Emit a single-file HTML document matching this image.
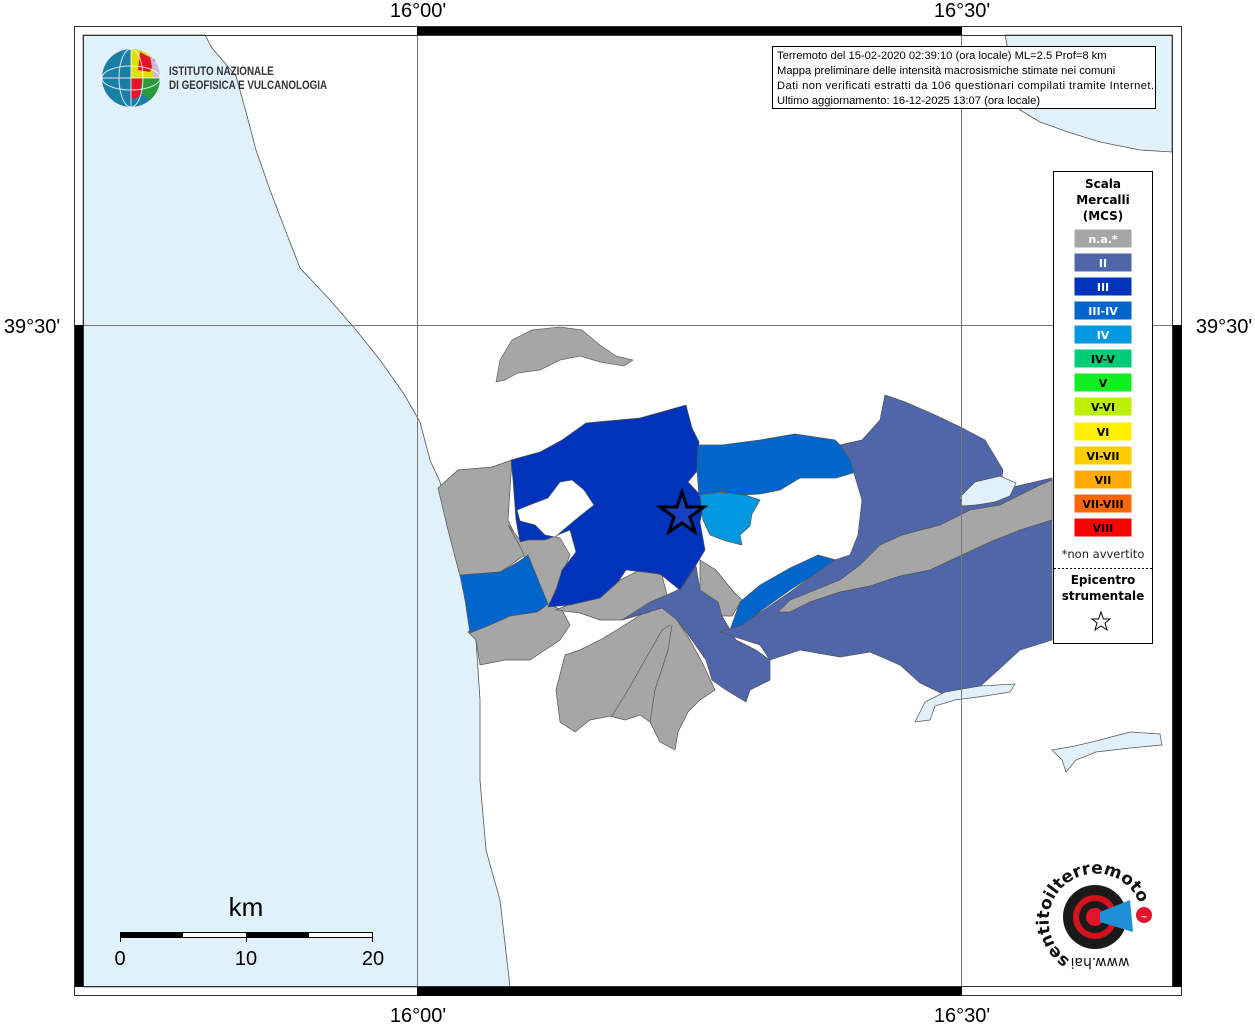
<!DOCTYPE html>
<html><head><meta charset="utf-8"><style>
html,body{margin:0;padding:0;background:#fff;}
svg{display:block;font-family:"Liberation Sans",sans-serif;}
</style></head><body>
<svg width="1255" height="1024" viewBox="0 0 1255 1024" xmlns="http://www.w3.org/2000/svg">
<rect width="1255" height="1024" fill="#fff"/>
<path d="M83,35 L205,35 L212,48 L236,76 L246,112 L256,150 L270,190 L286,232 L300,268 L330,300 L356,330 L380,360 L404,394 L420,422 L430,460 L440,482 L450,522 L460,560 L470,600 L476,640 L480,700 L480,780 L486,850 L500,900 L510,987 L83,987 Z" fill="#e0f1fc" stroke="#555" stroke-width="0.8"/>
<path d="M1005,35 L1172,35 L1172,152 L1140,150 L1100,142 L1068,132 L1040,122 L1020,110 Z" fill="#e0f1fc" stroke="#555" stroke-width="0.8"/>
<path d="M496,382 L500,360 L512,340 L532,330 L560,327 L582,330 L600,345 L616,356 L633,360 L624,366 L600,362 L580,356 L560,360 L540,370 L518,373 L505,380 Z" fill="#a6a6a6" stroke="#666" stroke-width="0.7"/>
<g stroke="#555" stroke-width="0.7">
<path d="M438,488 L458,470 L492,467 L512,460 L508,520 L520,545 L528,548 L540,600 L525,555 L500,572 L460,576 L448,530 Z" fill="#a6a6a6"/>
<path d="M508,525 L520,540 L530,530 L560,538 L570,555 L560,580 L548,607 L532,580 L522,550 Z" fill="#a6a6a6"/>
<path d="M468,632 L510,614 L540,610 L548,604 L562,610 L570,625 L560,640 L530,660 L505,660 L480,665 L476,640 Z" fill="#a6a6a6"/>
<path d="M460,575 L500,572 L518,562 L528,555 L548,604 L537,612 L510,616 L490,625 L470,633 L465,600 Z" fill="#0066cc"/>
<path d="M565,655 L580,650 L600,640 L620,628 L642,614 L662,604 L677,620 L690,640 L702,662 L715,690 L700,700 L688,712 L678,732 L675,750 L660,742 L650,722 L640,715 L625,720 L610,716 L590,720 L575,732 L560,722 L556,690 Z" fill="#a6a6a6"/>
<path d="M612,716 L628,690 L645,660 L662,630 L670,625 M650,722 L655,690 L668,650 L672,625" fill="none"/>
<path d="M556,610 L570,604 L600,598 L620,580 L640,570 L662,575 L667,595 L650,612 L622,620 L600,620 L580,613 Z" fill="#a6a6a6"/>
<path d="M622,620 L650,602 L667,595 L682,588 L696,566 L700,590 L718,602 L722,616 L736,640 L756,650 L770,660 L770,680 L750,690 L746,702 L726,690 L712,680 L706,660 L692,640 L677,620 L662,608 Z" fill="#4f66ab"/>
<path d="M700,560 L716,570 L732,590 L742,600 L732,616 L722,616 L718,602 L700,590 Z" fill="#a6a6a6"/>
<path d="M511,460 L540,452 L562,440 L586,423 L640,418 L686,405 L692,428 L699,442 L698,470 L688,482 L705,500 L700,522 L705,550 L696,565 L680,590 L660,574 L626,570 L618,582 L600,598 L570,605 L548,607 L556,590 L562,570 L576,552 L570,530 L545,540 L528,540 L520,542 L516,520 L513,480 Z" fill="#0033bb"/>
<path d="M517,510 L532,504 L548,498 L560,482 L572,480 L584,490 L594,505 L580,516 L568,526 L555,537 L545,535 L535,525 L520,521 Z" fill="#ffffff"/>
<path d="M698,445 L722,445 L760,440 L795,434 L835,440 L850,455 L856,472 L836,478 L800,478 L780,490 L760,494 L740,495 L716,492 L699,496 L697,470 Z" fill="#0066cc"/>
<path d="M730,630 L740,602 L760,585 L790,568 L818,555 L836,560 L812,576 L790,590 L762,610 L742,626 Z" fill="#0066cc"/>
<path d="M700,495 L720,492 L745,495 L760,500 L752,514 L750,526 L740,535 L742,545 L726,541 L710,535 L703,520 Z" fill="#0099e0"/>
<path d="M840,445 L862,440 L880,420 L885,395 L905,402 L935,415 L962,428 L985,440 L1003,470 L1000,490 L1052,478 L1052,640 L1020,650 L996,672 L976,690 L945,695 L920,683 L900,665 L870,652 L840,657 L800,650 L770,660 L760,645 L720,632 L742,625 L790,592 L835,560 L850,555 L858,535 L862,500 L856,480 L850,460 Z" fill="#4f66ab"/>
<path d="M778,612 L790,600 L810,592 L840,580 L860,565 L880,545 L902,535 L940,525 L970,510 L1000,505 L1040,485 L1052,480 L1052,520 L1020,530 L990,542 L960,556 L930,570 L900,576 L870,586 L840,592 L810,602 L790,612 Z" fill="#a6a6a6"/>
<path d="M960,497 L975,482 L1000,476 L1016,483 L1010,496 L995,502 L976,505 L962,506 Z" fill="#e0f1fc"/>
<path d="M915,722 L925,702 L945,692 L980,686 L1015,684 L1010,692 L985,696 L955,700 L935,706 L930,720 Z" fill="#e0f1fc"/>
<path d="M1052,750 L1075,746 L1100,740 L1130,732 L1160,734 L1162,745 L1130,748 L1096,752 L1076,760 L1066,772 L1062,760 Z" fill="#e0f1fc"/>
</g>
<polygon points="682,492 687,507 704,507 690,517 695,532 682,523 669,532 674,517 660,507 677,507" fill="#1a3ec0" stroke="#000" stroke-width="3"/>
<g stroke="#777" stroke-width="1">
<line x1="417.5" y1="35" x2="417.5" y2="987"/>
<line x1="961.5" y1="35" x2="961.5" y2="987"/>
<line x1="83" y1="325.5" x2="1172" y2="325.5"/>
</g>
<rect x="74.5" y="26.5" width="1107" height="969" fill="none" stroke="#333" stroke-width="1"/>
<rect x="83.5" y="35.5" width="1089" height="951" fill="none" stroke="#333" stroke-width="1"/>
<rect x="417" y="27" width="545" height="8" fill="#000"/>
<rect x="417" y="987" width="545" height="9" fill="#000"/>
<rect x="75" y="325" width="8" height="662" fill="#000"/>
<rect x="1173" y="325" width="9" height="662" fill="#000"/>
<g font-size="20" fill="#000" text-anchor="middle">
<text x="418" y="17">16°00'</text>
<text x="962" y="17">16°30'</text>
<text x="418" y="1022">16°00'</text>
<text x="962" y="1022">16°30'</text>
<text x="32" y="333">39°30'</text>
<text x="1224" y="333">39°30'</text>
</g>
<circle cx="131" cy="78" r="29" fill="#1a7ea6"/>
<path d="M131,49 A29,29 0 0 1 160,78 L131,78 Z" fill="#e0e000"/>
<path d="M140,52 L155,60 L150,72 L138,70 Z" fill="#e3132a"/>
<path d="M138,78 L160,78 A29,29 0 0 1 150,100 L140,92 Z" fill="#2a9a3a"/>
<path d="M131,78 L142,78 L140,96 L131,100 Z" fill="#e3132a"/>
<path d="M150,56 A29,29 0 0 1 160,78 L154,78 Z" fill="#c9b8d9"/>
<g stroke="#fff" stroke-width="1" fill="none" opacity="0.8">
<ellipse cx="131" cy="78" rx="12" ry="29"/><ellipse cx="131" cy="78" rx="29" ry="12"/><line x1="131" y1="49" x2="131" y2="107"/><line x1="102" y1="78" x2="160" y2="78"/>
</g>
<g font-size="12" fill="#333" font-weight="bold" font-family="'Liberation Sans Narrow','Liberation Sans',sans-serif">
<text x="0" y="0" transform="translate(169,75) scale(0.82,1)">ISTITUTO NAZIONALE</text>
<text x="0" y="0" transform="translate(169,89) scale(0.82,1)">DI GEOFISICA E VULCANOLOGIA</text>
</g>
<rect x="772.5" y="46.5" width="383" height="62" fill="#fff" stroke="#000" stroke-width="1"/>
<g font-size="11.2" fill="#000">
<text x="777" y="59">Terremoto del 15-02-2020 02:39:10 (ora locale) ML=2.5 Prof=8 km</text>
<text x="777" y="74">Mappa preliminare delle intensità macrosismiche stimate nei comuni</text>
<text x="777" y="89" textLength="377">Dati non verificati estratti da 106 questionari compilati tramite Internet.</text>
<text x="777" y="104">Ultimo aggiornamento: 16-12-2025 13:07 (ora locale)</text>
</g>
<rect x="1053.5" y="171.5" width="99" height="472" fill="#fff" stroke="#000" stroke-width="1"/>
<g font-family="'DejaVu Sans',sans-serif" font-size="12" font-weight="bold" text-anchor="middle" fill="#000">
<text x="1103" y="188">Scala</text><text x="1103" y="204">Mercalli</text><text x="1103" y="220">(MCS)</text>
</g>
<g font-family="'DejaVu Sans',sans-serif" font-size="11" font-weight="bold" text-anchor="middle" stroke="#000" stroke-width="0">
<rect x="1074.5" y="229.5" width="57" height="18" fill="#a6a6a6" stroke="#000"/><text x="1103" y="243" fill="#fff">n.a.*</text>
<rect x="1074.5" y="253.5" width="57" height="18" fill="#4f66ab" stroke="#000"/><text x="1103" y="267" fill="#fff">II</text>
<rect x="1074.5" y="277.5" width="57" height="18" fill="#0033bb" stroke="#000"/><text x="1103" y="291" fill="#fff">III</text>
<rect x="1074.5" y="301.5" width="57" height="18" fill="#0066cc" stroke="#000"/><text x="1103" y="315" fill="#fff">III-IV</text>
<rect x="1074.5" y="325.5" width="57" height="18" fill="#0099e0" stroke="#000"/><text x="1103" y="339" fill="#fff">IV</text>
<rect x="1074.5" y="349.5" width="57" height="18" fill="#00cc77" stroke="#000"/><text x="1103" y="363" fill="#000">IV-V</text>
<rect x="1074.5" y="373.5" width="57" height="18" fill="#11ee22" stroke="#000"/><text x="1103" y="387" fill="#000">V</text>
<rect x="1074.5" y="397.5" width="57" height="18" fill="#bbf000" stroke="#000"/><text x="1103" y="411" fill="#000">V-VI</text>
<rect x="1074.5" y="422.5" width="57" height="18" fill="#ffee00" stroke="#000"/><text x="1103" y="436" fill="#000">VI</text>
<rect x="1074.5" y="446.5" width="57" height="18" fill="#ffcc00" stroke="#000"/><text x="1103" y="460" fill="#000">VI-VII</text>
<rect x="1074.5" y="470.5" width="57" height="18" fill="#ffaa00" stroke="#000"/><text x="1103" y="484" fill="#000">VII</text>
<rect x="1074.5" y="494.5" width="57" height="18" fill="#ff6600" stroke="#000"/><text x="1103" y="508" fill="#000">VII-VIII</text>
<rect x="1074.5" y="518.5" width="57" height="18" fill="#ff0000" stroke="#000"/><text x="1103" y="532" fill="#000">VIII</text>
</g>
<text x="1103" y="558" font-family="'DejaVu Sans',sans-serif" font-size="11.5" text-anchor="middle" fill="#222">*non avvertito</text>
<line x1="1054" y1="568.5" x2="1152" y2="568.5" stroke="#000" stroke-dasharray="2,2"/>
<g font-family="'DejaVu Sans',sans-serif" font-size="12" font-weight="bold" text-anchor="middle" fill="#000">
<text x="1103" y="584">Epicentro</text><text x="1103" y="600">strumentale</text>
</g>
<polygon points="1101,612 1103.5,619 1110,619 1105,623 1107,630 1101,626 1095,630 1097,623 1092,619 1098.5,619" fill="none" stroke="#000" stroke-width="1"/>
<text x="246" y="916" font-size="26" text-anchor="middle">km</text>
<rect x="120.5" y="932.5" width="252" height="5" fill="#fff" stroke="#000"/>
<rect x="120" y="932" width="63" height="6" fill="#000"/>
<rect x="246" y="932" width="63" height="6" fill="#000"/>
<line x1="120.5" y1="932" x2="120.5" y2="942" stroke="#000"/>
<line x1="246.5" y1="932" x2="246.5" y2="942" stroke="#000"/>
<line x1="372.5" y1="932" x2="372.5" y2="942" stroke="#000"/>
<g font-size="20" text-anchor="middle"><text x="120" y="965">0</text><text x="246" y="965">10</text><text x="373" y="965">20</text></g>
<defs><path id="arc" d="M1070,960 A47,47 0 1 1 1140,905"/></defs>
<circle cx="1095" cy="917" r="32" fill="#1a1a1a"/>
<circle cx="1095" cy="917" r="22" fill="#d5121c"/>
<circle cx="1095" cy="917" r="16" fill="#1a1a1a"/>
<circle cx="1095" cy="917" r="9" fill="#e3132a"/>
<path d="M1100,912 L1130,900 L1133,932 L1100,922 Z" fill="#1e90d8"/>
<circle cx="1144" cy="915" r="8" fill="#e3132a"/><text x="1144" y="920" font-size="10" fill="#fff" text-anchor="middle" font-weight="bold">~</text>
<text font-size="17" font-weight="bold" fill="#111" font-family="'DejaVu Sans',sans-serif"><textPath href="#arc">sentitoilterremoto.<tspan fill="#e3132a">it</tspan></textPath></text>
<text x="1100" y="968" font-size="14" fill="#111" text-anchor="middle" font-family="'DejaVu Sans',sans-serif" transform="rotate(180 1100 963)">www.hai</text>
</svg>
</body></html>
